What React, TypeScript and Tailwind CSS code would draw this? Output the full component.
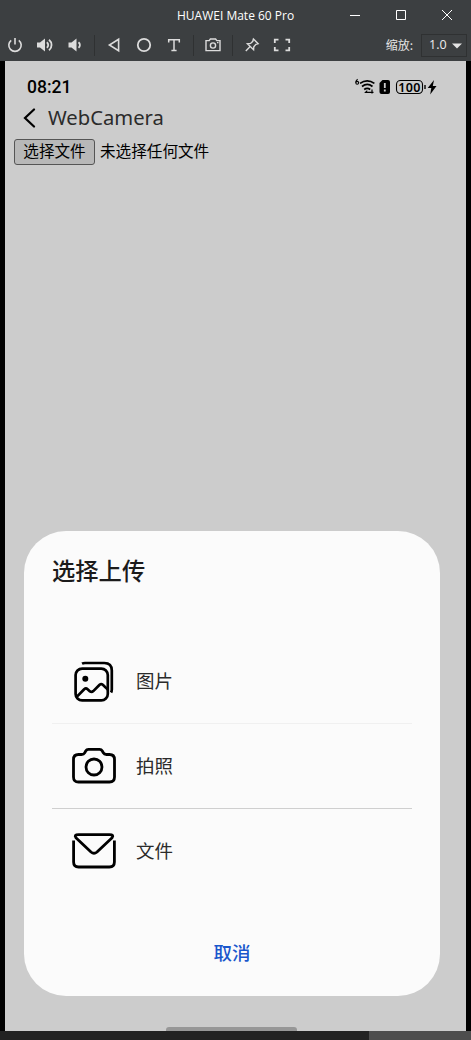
import type { ReactNode } from 'react'

const UI_FONT = "font-['Open_Sans','Noto_Sans_CJK_SC',sans-serif]"
const CJK_FONT = "font-['Noto_Sans_CJK_SC',sans-serif]"

function ToolIcon({ children }: { children: ReactNode }) {
  return (
    <button className="flex w-[30px] items-center justify-center">
      <svg width="20" height="20" viewBox="0 0 20 20" fill="none" stroke="#dcdcdc" strokeWidth="1.6">
        {children}
      </svg>
    </button>
  )
}

function Separator() {
  return (
    <div className="flex w-[9px] justify-center">
      <div className="h-[21px] w-px bg-[#2f3132]" />
    </div>
  )
}

function TitleBar() {
  return (
    <div className="flex h-[30px]">
      <div className={`flex-1 pl-[177px] text-[12px] leading-[32px] whitespace-nowrap text-white ${UI_FONT}`}>
        <span>HUAWEI Mate 60 Pro</span>
      </div>
      <svg className="mr-[18px]" width="104" height="30" viewBox="0 0 104 30" fill="none" stroke="#fff">
        <path d="M1 15.5h10" />
        <path d="M47.5 10.5h9v9h-9z" />
        <path d="M93 10l10 10M103 10l-10 10" />
      </svg>
    </div>
  )
}

function Toolbar() {
  return (
    <div className="flex h-[30px] items-center">
      <ToolIcon>
        <path d="M10 3v6.5M6.2 5.3a6.2 6.2 0 1 0 7.6 0" />
      </ToolIcon>
      <ToolIcon>
        <path d="M2 7.5h3l5-4v13l-5-4H2z" fill="#dcdcdc" stroke="none" />
        <path d="M11.8 7.2a3.5 3.5 0 0 1 0 5.6M14 4.7a6.8 6.8 0 0 1 0 10.6" strokeWidth="1.8" />
      </ToolIcon>
      <ToolIcon>
        <path d="M3.5 7.5h3l5-4v13l-5-4h-3z" fill="#dcdcdc" stroke="none" />
        <path d="M13.5 7.2a3.5 3.5 0 0 1 0 5.6" strokeWidth="1.8" />
      </ToolIcon>
      <Separator />
      <ToolIcon>
        <path d="M14.6 4.2v11.6L5.4 10z" />
      </ToolIcon>
      <ToolIcon>
        <circle cx="10" cy="10" r="6.2" strokeWidth="1.8" />
      </ToolIcon>
      <ToolIcon>
        <path d="M4.7 7.5V4.8h10.6v2.7M10 5v10.5M7.4 15.4h5.2" strokeWidth="1.5" />
      </ToolIcon>
      <Separator />
      <ToolIcon>
        <path d="M3 5.6h3.2L7.4 4h5.2l1.2 1.6H17v10H3z" strokeWidth="1.4" />
        <circle cx="10" cy="10.5" r="2.6" strokeWidth="1.4" />
        <path d="M14 7.6h1.5" strokeWidth="1.2" />
      </ToolIcon>
      <Separator />
      <ToolIcon>
        <path d="M11.4 4l4.7 4.7-2.2.7-2.1 2.3-.2 3.1-6.2-6.1 3.2-.3 2.2-2.1zM7.7 12l-3.9 4" strokeWidth="1.4" />
      </ToolIcon>
      <ToolIcon>
        <path d="M6.5 4.7H2.8V8M13.5 4.7h3.7V8M6.5 15.3H2.8V12M13.5 15.3h3.7V12" strokeWidth="1.8" />
      </ToolIcon>
      <span className={`ml-auto text-[12px] text-[#e4e4e4] ${CJK_FONT}`}>缩放:</span>
      <button className={`mr-[4px] ml-[8px] mt-px flex h-[23px] w-[46px] items-center justify-between border border-[#2f3132] pr-[4px] pl-[7px] text-[12.5px] text-[#eee] ${UI_FONT}`}>
        1.0
        <svg width="10" height="6" viewBox="0 0 10 6" fill="#e4e4e4">
          <path d="M0 .5h10L5 5.5z" />
        </svg>
      </button>
    </div>
  )
}

function StatusBar() {
  return (
    <div className="flex h-[40px] items-center pt-[12px] pr-[27px] pl-[22px]">
      <span className="font-['Roboto',sans-serif] text-[17.5px] leading-5 font-medium text-black">08:21</span>
      <svg className="ml-auto" width="84" height="20" viewBox="0 0 84 20" fill="none" stroke="#000">
        <path d="M2.6 2.2Q.8 3.600.8 5.600" strokeWidth="1.1" />
        <circle cx="2.200" cy="5.800" r="1.400" strokeWidth="1.1" />
        <path d="M5 6.400q7.200-5.200 14.400 0M7 9.500q5.300-4.200 10.500 0M9.200 12.500q3-2.200 6 0" strokeWidth="1.7" />
        <path d="M9.500 15.500l2.700-2.400v1.600h6.300v1.400H9.500z" fill="#000" stroke="none" />
        <path d="M17 12.500v4" strokeWidth="1.200" />
        <path d="M27.500 3h5.500q2 0 2 2v10q0 2-2 2h-6.500q-2 0-2-2V6z" fill="#000" stroke="none" />
        <path d="M29.800 6v5M29.800 12.600v1.800" stroke="#ccc" strokeWidth="1.800" />
        <rect x="41.500" y="3.500" width="26" height="13" rx="4" strokeWidth="1.100" />
        <path d="M70 8v4" strokeWidth="1.400" />
        <path d="M79 3l-6.300 8h3.600l-1.100 6.500 6.300-8.500h-3.700z" fill="#000" stroke="none" />
        <text x="54.500" y="14.500" textAnchor="middle" fill="#000" stroke="none" className="font-['Noto_Sans',sans-serif] text-[12.5px] font-semibold tracking-[0.3px]">100</text>
      </svg>
    </div>
  )
}

function FileInput() {
  return (
    <div className={`mt-[5px] flex items-center pl-[9px] text-[15.6px] text-black ${CJK_FONT}`}>
      <button className="flex h-[26px] w-[81px] items-center justify-center rounded-[3px] border border-[#555] bg-[#b8b8b8] pb-[2px]">
        选择文件
      </button>
      <span className="ml-[5px] pb-[3px] leading-[23px]">未选择任何文件</span>
    </div>
  )
}

function PictureIcon() {
  return (
    <svg width="44" height="44" viewBox="0 0 44 44" fill="none" stroke="#000" strokeWidth="2.7" strokeLinejoin="round">
      <rect x="3.6" y="9.600" width="32.200" height="31.800" rx="6.500" />
      <path d="M10 4.600q1.200-.6 3-.6h19.300q7.500 0 7.500 7.500v19q0 1.800-.8 3" />
      <path d="M4.200 38.400l8-8.200q1.700-1.500 3.400 0l2.400 2.200q1.700 1.200 3.300-.3l6.300-6.300q1.600-1.300 3.200 0l5 4.800" />
      <circle cx="13.300" cy="19.700" r="3" fill="#000" stroke="none" />
    </svg>
  )
}

function CameraIcon() {
  return (
    <svg width="44" height="44" viewBox="0 0 44 44" fill="none" stroke="#000" strokeWidth="2.8" strokeLinejoin="round">
      <path d="M6.500 10.500h3q2.300 0 3.200-1.700l1-1.800q.9-1.600 2.800-1.600h11q1.900 0 2.800 1.600l1 1.800q.9 1.700 3.200 1.700h3q5 0 5 5v17.500q0 5-5 5h-31q-5 0-5-5V15.500q0-5 5-5z" />
      <circle cx="22" cy="23" r="8" />
    </svg>
  )
}

function MailIcon() {
  return (
    <svg width="44" height="44" viewBox="0 0 44 44" fill="none" stroke="#000" strokeWidth="2.8" strokeLinejoin="round">
      <path d="M1.600 11.500V33q0 5 5 5h30.800q5 0 5-5V11.500" />
      <path d="M3.900 8.700Q1.700 5.600 6.500 5.600h31q4.800 0 2.600 3.100L25 23q-3 2.600-6 0z" />
    </svg>
  )
}

const options = [
  { label: '图片', icon: <PictureIcon />, border: 'border-[#f0f0f0]' },
  { label: '拍照', icon: <CameraIcon />, border: 'border-[#cfcfcf]' },
  { label: '文件', icon: <MailIcon />, border: 'border-transparent' },
]

function UploadDialog() {
  return (
    <div className={`mt-auto mr-[26px] mb-[31px] ml-[19px] flex h-[465px] flex-col rounded-[42px] bg-[#fbfbfb] px-[28px] ${CJK_FONT}`}>
      <h2 className="mt-[22px] text-[23.3px] leading-[34px] font-medium text-[#1b1b1b]">选择上传</h2>
      <ul className="mt-[52px]">
        {options.map(({ label, icon, border }) => (
          <li key={label} className={`flex h-[85px] items-center border-b pl-[20px] ${border}`}>
            {icon}
            <span className="ml-[20px] text-[18.5px] text-[#2b2b2b]">{label}</span>
          </li>
        ))}
      </ul>
      <button className="mt-[43px] self-center text-[18.5px] leading-[30px] font-medium text-[#1a57cc]">取消</button>
    </div>
  )
}

export default function App() {
  return (
    <div className="flex h-[1040px] w-[471px] flex-col overflow-hidden bg-black">
      <header className="h-[61px] shrink-0 bg-[#3c3f41]">
        <TitleBar />
        <Toolbar />
      </header>
      <main className="mr-[5px] ml-[5px] flex h-[970px] flex-col bg-[#ccc]">
        <StatusBar />
        <div className="flex h-[33px] items-center pl-[18px]">
          <svg width="14" height="20" viewBox="0 0 14 20" fill="none" stroke="#000" strokeWidth="2.2" strokeLinecap="round">
            <path d="M11 1.500L2 10l9 8.500" />
          </svg>
          <span className="ml-[11px] font-['Noto_Sans',sans-serif] text-[20.2px] text-[#2b2b2b]">WebCamera</span>
        </div>
        <FileInput />
        <UploadDialog />
        <div className="ml-[161px] h-[4px] w-[131px] rounded-t-[3px] bg-[#979797]" />
      </main>
      <footer className="flex h-[9px] bg-[#222]">
        <div className="ml-auto w-[102px] bg-[#4d4d4d]" />
      </footer>
    </div>
  )
}
